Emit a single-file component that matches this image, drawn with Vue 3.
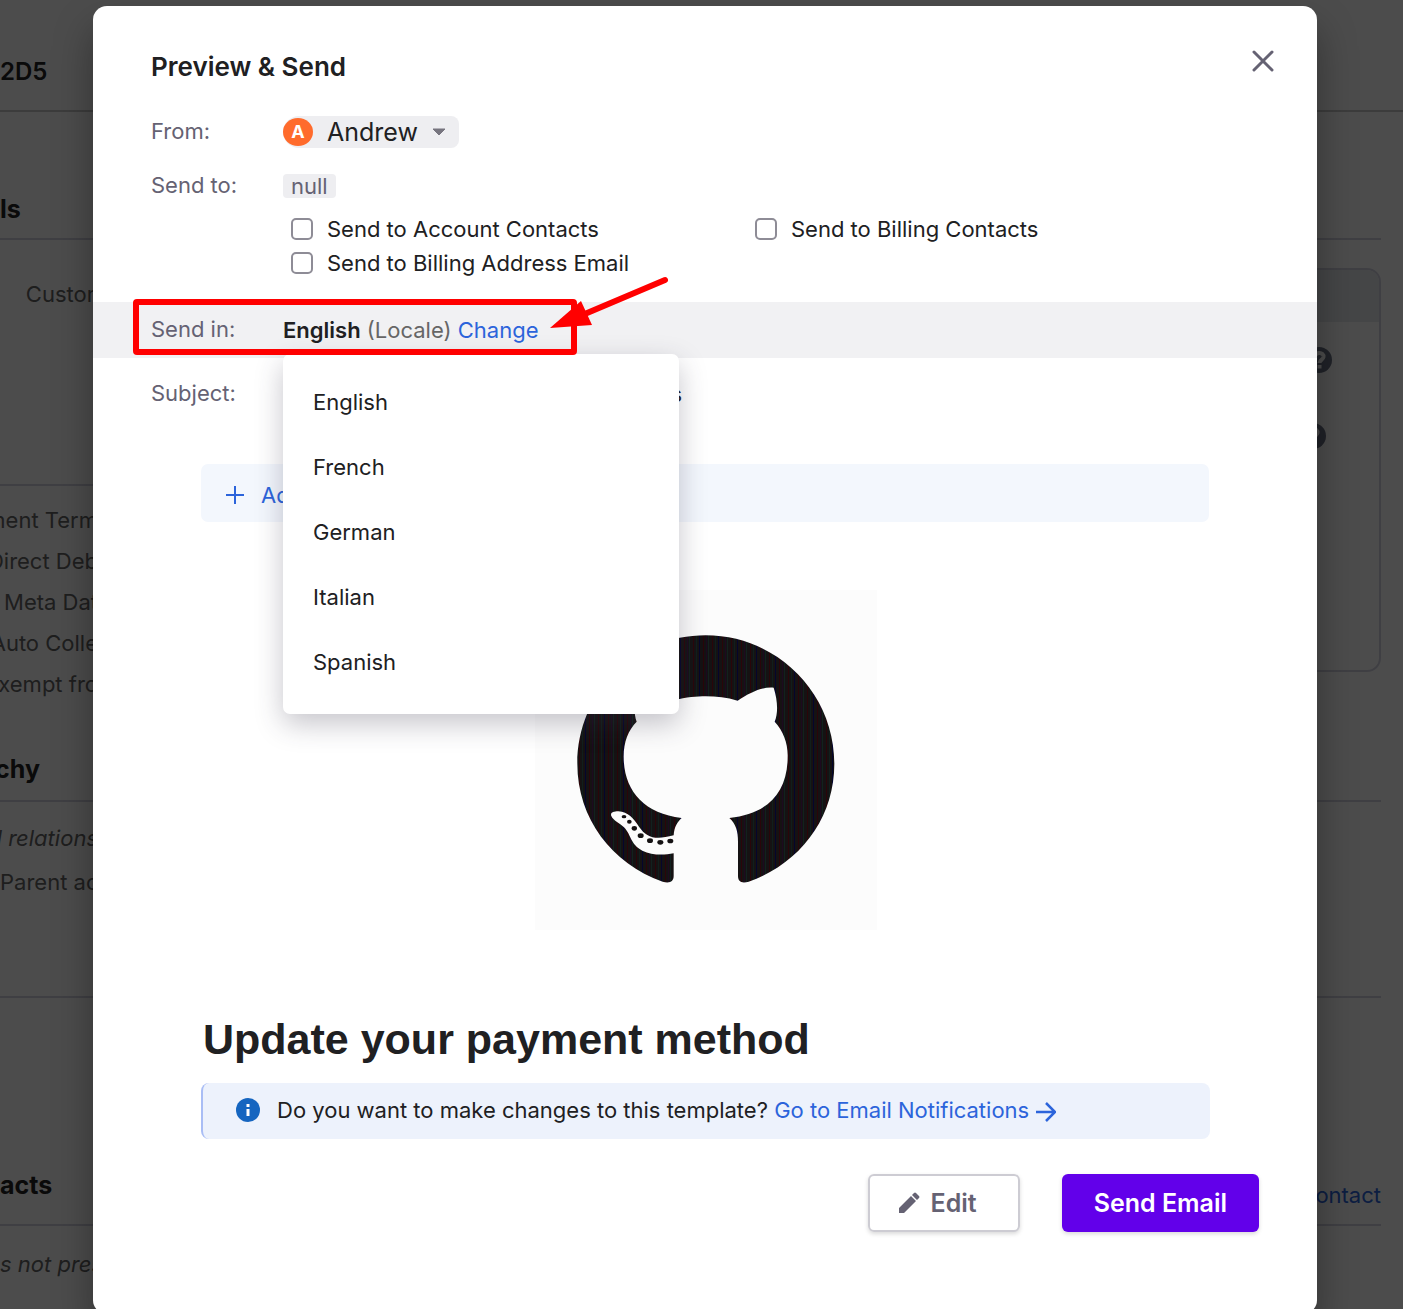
<template>
  <div class="screen">
    <main class="page">
      <header class="page-header"><h1>2D5</h1></header>

      <section class="section">
        <h2 class="section-title first">ls</h2>
        <div class="details">
          <div class="details-main">
            <div class="row clip custom">Custom</div>
            <hr class="divider">
            <div class="row clip">Payment Term</div>
            <div class="row clip">Direct Deb</div>
            <div class="row clip">Meta Dat</div>
            <div class="row clip">Auto Colle</div>
            <div class="row clip">Exempt fro</div>
          </div>
          <aside class="card">
            <div class="card-head"></div>
            <div class="card-row">
              <svg width="26" height="26" viewBox="0 0 26 26"><circle cx="13" cy="13" r="13" fill="#6b7285" /><path d="M9 9.5C9.3 4.5 18 5 17.5 10C17 13 13.5 13 13.5 16M13.5 18V21.5" fill="none" stroke="#fff" stroke-width="4" /></svg>
            </div>
            <div class="card-row second">
              <svg width="26" height="26" viewBox="0 0 26 26"><circle cx="13" cy="13" r="13" fill="#6b7285" /><path d="M9 9.5C9.3 4.5 18 5 17.5 10C17 13 13.5 13 13.5 16M13.5 18V21.5" fill="none" stroke="#fff" stroke-width="4" /></svg>
            </div>
          </aside>
        </div>
      </section>

      <section class="section hierarchy">
        <h2 class="section-title"><span>Hierarchy</span></h2>
        <p class="row clip"><em>and relations</em></p>
        <p class="row">Parent account</p>
      </section>

      <section class="section contacts">
        <div class="contacts-head">
          <h2>acts</h2>
          <a href="#" class="add-contact">Add Contact</a>
        </div>
        <p class="row"><em>s not present</em></p>
      </section>
    </main>

    <div class="overlay">
      <div class="modal" role="dialog" aria-labelledby="modal-title">
        <header class="modal-header">
          <h2 id="modal-title">Preview &amp; Send</h2>
          <button class="close" type="button" aria-label="Close">
            <svg width="24" height="24" viewBox="0 0 24 24"><path d="M3 3L21 21M21 3L3 21" stroke="#656273" stroke-width="3" stroke-linecap="round" /></svg>
          </button>
        </header>

        <div class="field from">
          <span class="label">From:</span>
          <button class="sender" type="button">
            <span class="avatar">A</span>
            <span class="sender-name">Andrew</span>
            <svg width="14" height="8" viewBox="0 0 14 8"><path d="M1 1H13L7 7Z" fill="#77757f" stroke="#77757f" /></svg>
          </button>
        </div>

        <div class="field to">
          <span class="label">Send to:</span>
          <span class="tag">null</span>
        </div>

        <div class="recipients">
          <label v-for="r in recipients" :key="r.label" class="check">
            <input v-model="r.checked" type="checkbox">
            <span>{{ r.label }}</span>
          </label>
        </div>

        <div class="field locale">
          <span class="label">Send in:</span>
          <div><strong>{{ locale }}</strong> <span class="muted">(Locale)</span> <a href="#" @click.prevent="menuOpen = !menuOpen">Change</a></div>

          <ul v-if="menuOpen" class="menu">
            <li v-for="lang in languages" :key="lang">
              <button type="button" @click="pick(lang)">{{ lang }}</button>
            </li>
          </ul>

          <!-- callout around the locale row -->
          <svg class="callout" width="540" height="84" viewBox="0 0 540 84">
            <rect x="6" y="26" width="438" height="50" rx="1" fill="none" stroke="#f00" stroke-width="6" />
            <path d="M535 4L450 40" stroke="#f00" stroke-width="6" stroke-linecap="round" />
            <path d="M420 52L451 25L462 49Z" fill="#f00" />
          </svg>
        </div>

        <div class="field subject">
          <span class="label">Subject:</span>
          <span class="subject-text">Update your payment details</span>
        </div>

        <button class="add-message" type="button">
          <svg width="18" height="18" viewBox="0 0 18 18"><path d="M9 0V18M0 9H18" stroke="#2c64db" stroke-width="2" /></svg>
          <span>Add message</span>
        </button>

        <div class="mail">
          <svg class="logo" width="342" height="340" viewBox="45 60 1026 1020" aria-label="GitHub">
            <defs>
              <pattern id="ink" width="57" height="20" patternUnits="userSpaceOnUse">
                <rect width="57" height="20" fill="#151213" />
                <rect x="6" width="3" height="20" fill="#2a0509" />
                <rect x="15" width="3" height="20" fill="#101f1c" />
                <rect x="24" width="3" height="20" fill="#05052c" />
                <rect x="36" width="3" height="20" fill="#2a0509" />
                <rect x="45" width="3" height="20" fill="#1c0a20" />
                <rect x="51" width="3" height="20" fill="#12211f" />
              </pattern>
            </defs>
            <rect x="45" y="60" width="1026" height="1020" fill="#fcfcfc" />
            <path fill="url(#ink)" d="M557 196C344 196 172 368 172 581C172 745 275 880 428 935C450 941 461 934 461 918V850C430 856 395 856 367 842C330 822 336 798 312 772C298 758 280 752 274 738C270 728 280 724 295 724C325 726 340 745 357 770C380 803 405 811 461 796C463 770 472 756 485 744C370 730 311 660 311 560C311 515 325 480 350 455C340 430 342 385 353 353C390 350 425 368 461 392C500 381 530 379 557 379C590 379 620 382 653 392C690 368 725 350 761 353C773 390 775 430 764 455C790 483 804 520 803 560C803 665 745 733 628 744C648 762 654 785 654 815V918C654 935 665 941 686 935C840 880 943 745 943 581C943 368 770 196 557 196Z" />
            <g fill="#151213">
              <ellipse cx="312" cy="740" rx="7" ry="5" />
              <ellipse cx="328" cy="755" rx="7" ry="6" />
              <ellipse cx="343" cy="775" rx="8" ry="7" />
              <ellipse cx="362" cy="797" rx="9" ry="7" />
              <ellipse cx="390" cy="812" rx="9" ry="7" />
              <ellipse cx="421" cy="817" rx="9" ry="7" />
              <ellipse cx="451" cy="813" rx="9" ry="7" />
            </g>
          </svg>
          <h1 class="mail-title">Update your payment method</h1>
        </div>

        <div class="notice">
          <svg width="24" height="24" viewBox="0 0 24 24"><circle cx="12" cy="12" r="12" fill="#1565c0" /><path d="M12 6V9M12 11V18" stroke="#fff" stroke-width="3" /></svg>
          <p>
            Do you want to make changes to this template?
            <a href="#">Go to Email Notifications<svg width="20" height="20" viewBox="0 0 20 20"><path d="M0 10H18M10 1L19 10L10 19" fill="none" stroke="#2c64db" stroke-width="2.5" /></svg></a>
          </p>
        </div>

        <footer class="modal-footer">
          <button class="btn secondary" type="button">
            <svg width="24" height="24" viewBox="0 0 24 24"><path d="M2 22V17L14 5L19 10L7 22ZM15 4L17 2Q18 1 19 2L22 5Q23 6 22 7L20 9Z" fill="#656273" /></svg>
            Edit
          </button>
          <button class="btn primary" type="button">Send Email</button>
        </footer>
      </div>
    </div>
  </div>
</template>

<script setup>
import { ref } from 'vue'

const languages = ['English', 'French', 'German', 'Italian', 'Spanish']
const locale = ref('English')
const menuOpen = ref(true)

const recipients = ref([
  { label: 'Send to Account Contacts', checked: false },
  { label: 'Send to Billing Contacts', checked: false },
  { label: 'Send to Billing Address Email', checked: false }
])

function pick(lang) {
  locale.value = lang
  menuOpen.value = false
}
</script>

<style>
body {
  margin: 0;
  overflow: hidden;
}
</style>

<style scoped>
.screen {
  position: relative;
  height: 100vh;
  overflow: hidden;
  font-family: Inter, 'Liberation Sans', sans-serif;
  font-size: 22px;
  line-height: 32px;
  color: #202022;
}

h1,
h2,
p {
  margin: 0;
}

button {
  border: 0;
  padding: 0;
  background: none;
  font: inherit;
  color: inherit;
  cursor: pointer;
}

a {
  color: #2c64db;
  text-decoration: none;
}

/* page behind the dialog */
.page {
  color: #666;
}

.page h1,
.page h2 {
  font-size: 25px;
  line-height: 32px;
  font-weight: 700;
  color: #222;
}

.page-header {
  padding: 56px 0 22px;
  border-bottom: 2px solid #c8c8c8;
}

.page .page-header h1 {
  font-size: 24px;
  font-weight: 600;
}

.section {
  margin-right: 22px;
}

.section-title {
  padding-bottom: 15px;
  border-bottom: 2px solid #d4d4e2;
}

.section-title.first {
  padding: 81px 0 13px;
}

.details {
  display: flex;
}

.details-main {
  flex: 1;
  padding-top: 34px;
}

.divider {
  margin: 169px 0 14px;
  border: 0;
  border-top: 2px solid #d4d4e2;
}

.row {
  line-height: 41px;
  white-space: nowrap;
}

.row.clip {
  display: flex;
  justify-content: flex-end;
  width: 98px;
}

.row.custom {
  width: 106px;
}

.card {
  box-sizing: border-box;
  width: 400px;
  height: 404px;
  margin-top: 28px;
  border: 2px solid #d4d4e2;
  border-radius: 14px;
  overflow: hidden;
}

.card-head {
  height: 52px;
  background: #e6eaee;
}

.card-row {
  display: flex;
  justify-content: flex-end;
  padding: 25px 47px;
}

.card-row.second {
  padding-right: 53px;
}

.hierarchy {
  padding: 48px 0 92px;
  border-bottom: 2px solid #d4d4e2;
}

.hierarchy .row {
  line-height: 44px;
}

.hierarchy .section-title {
  margin-bottom: 14px;
}

.hierarchy .section-title span {
  display: flex;
  justify-content: flex-end;
  width: 40px;
}

.contacts-head {
  display: flex;
  justify-content: space-between;
  padding: 171px 0 13px;
  border-bottom: 2px solid #d4d4e2;
}

.contacts-head a {
  align-self: flex-end;
}

.contacts-head h2 {
  padding-bottom: 10px;
}

.contacts .row {
  padding-top: 18px;
}

/* dialog */
.overlay {
  position: absolute;
  inset: 0;
  padding: 6px 86px 0 93px;
  overflow: hidden;
  background: rgba(0, 0, 0, 0.7);
}

.modal {
  border-radius: 14px;
  background: #fff;
  box-shadow: 0 22px 38px rgba(0, 0, 0, 0.35);
}

.modal-header {
  display: flex;
  justify-content: space-between;
  padding: 43px 42px 0 58px;
}

.modal-header h2 {
  font-size: 26px;
  line-height: 36px;
  font-weight: 600;
}

.close,
.close svg {
  display: block;
  width: 24px;
  height: 24px;
}

.field {
  display: grid;
  grid-template-columns: 132px 1fr;
  align-items: center;
  justify-items: start;
  padding: 0 58px;
}

.label {
  padding-bottom: 2px;
  color: #656273;
  line-height: 30px;
}

.from {
  margin-top: 31px;
}

.sender {
  display: flex;
  align-items: center;
  height: 32px;
  padding-right: 13px;
  border-radius: 16px 8px 8px 16px;
  background: #eeeef1;
}

.avatar {
  width: 30px;
  height: 28px;
  margin-right: 14px;
  border-radius: 50%;
  background: #ff6b2c;
  color: #fff;
  font-size: 18px;
  line-height: 28px;
  font-weight: 700;
}

.sender-name {
  margin-right: 14px;
  font-size: 25px;
}

.to {
  margin-top: 22px;
}

.tag {
  padding: 0 8px;
  border-radius: 4px;
  background: #eeeef1;
  color: #656273;
  line-height: 24px;
}

.recipients {
  display: grid;
  grid-template-columns: 464px 1fr;
  margin: 10px 58px 0 198px;
}

.check {
  display: flex;
  align-items: center;
  gap: 14px;
  line-height: 34px;
}

.check input {
  appearance: none;
  width: 22px;
  height: 22px;
  margin: 0;
  border: 2px solid #8e8c96;
  border-radius: 5px;
  background: #fff;
}

.check input:checked {
  background: #2c64db;
}

.locale {
  position: relative;
  height: 56px;
  margin-top: 22px;
  background: #f1f1f3;
}

.locale strong {
  font-weight: 600;
}

.muted {
  color: #666;
}

.menu {
  position: absolute;
  top: 52px;
  left: 190px;
  width: 396px;
  box-sizing: border-box;
  margin: 0;
  padding: 16px 0 19px;
  border-radius: 7px;
  background: #fff;
  box-shadow: 0 10px 28px rgba(50, 48, 70, 0.28);
  list-style: none;
}

.menu button {
  display: block;
  width: 100%;
  padding: 0 30px;
  line-height: 65px;
  text-align: left;
}

.callout {
  position: absolute;
  top: -26px;
  left: 37px;
  pointer-events: none;
}

.subject {
  margin-top: 20px;
}

.subject-text {
  width: 399px;
  text-align: right;
}

.add-message {
  display: flex;
  align-items: center;
  gap: 17px;
  width: calc(100% - 216px);
  height: 58px;
  margin: 54px 108px 0;
  padding: 3px 25px 0;
  border-radius: 7px;
  background: #f3f7fd;
  color: #2c64db;
}

.mail {
  margin: 68px 108px 0 110px;
}

.logo {
  display: block;
  margin: 0 auto;
}

.mail-title {
  margin-top: 83px;
  font-family: 'Liberation Sans', Arial, sans-serif;
  font-size: 43px;
  line-height: 52px;
  font-weight: 700;
}

.notice {
  display: flex;
  align-items: center;
  gap: 17px;
  box-sizing: border-box;
  height: 56px;
  margin: 18px 107px 0 108px;
  padding: 0 0 2px 33px;
  border-left: 2px solid #a9bdf5;
  border-radius: 8px;
  background: #edf2fc;
}

.notice a svg {
  margin-left: 7px;
  vertical-align: -4px;
}

.modal-footer {
  display: flex;
  justify-content: flex-end;
  gap: 42px;
  padding: 35px 58px 82px;
}

.btn {
  box-sizing: border-box;
  height: 58px;
  border-radius: 6px;
  font-size: 25px;
  font-weight: 600;
  box-shadow: 0 2px 4px rgba(0, 0, 0, 0.15);
}

.btn.secondary {
  display: flex;
  align-items: center;
  gap: 10px;
  padding: 0 41px 0 27px;
  border: 2px solid #cdccd3;
  color: #656273;
}

.btn.primary {
  padding: 0 32px;
  background: #6200ea;
  color: #fff;
}
</style>
